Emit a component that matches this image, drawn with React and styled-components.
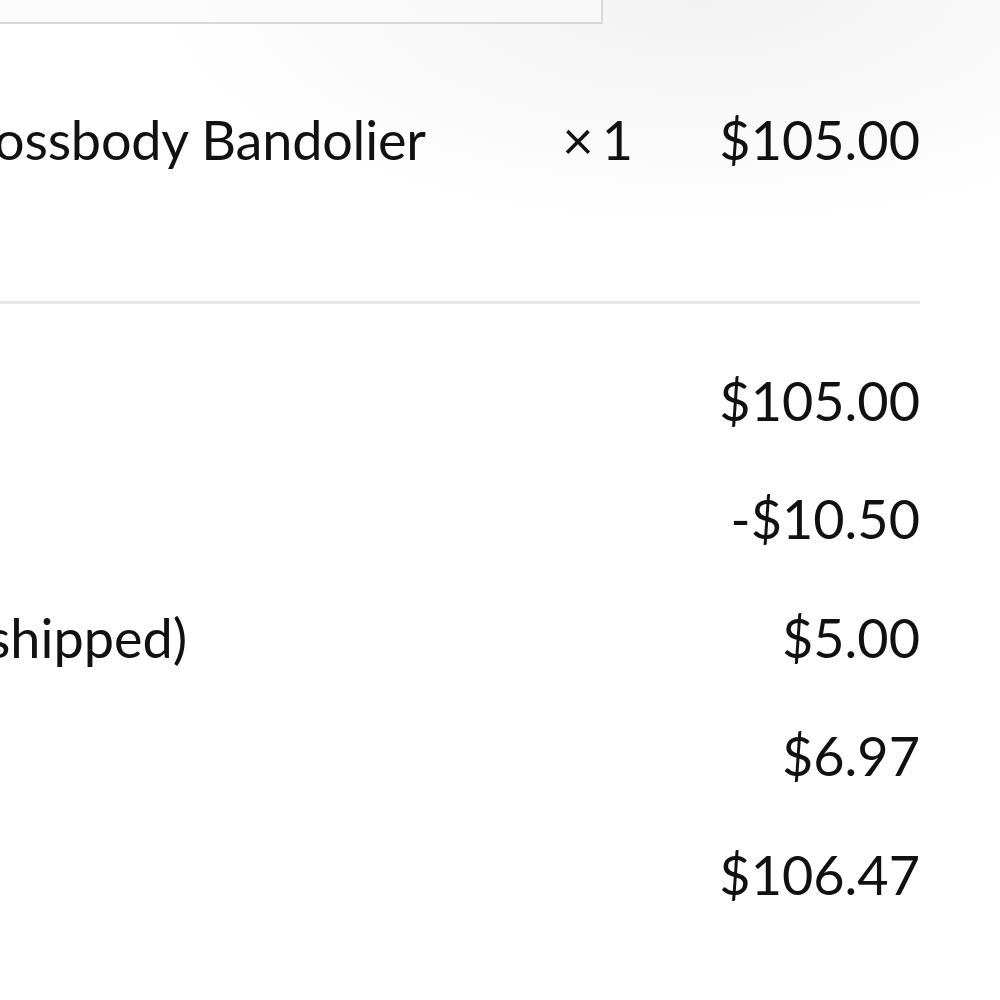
import React from 'react'
import styled, { createGlobalStyle } from 'styled-components'

const GlobalStyle = createGlobalStyle`
  html, body {
    margin: 0;
    padding: 0;
    background: #fff;
  }
  body {
    font-family: Lato, "Liberation Sans", sans-serif;
    color: #111;
  }
`

const Viewport = styled.div`
  width: 1000px;
  height: 1000px;
  overflow: hidden;
  background:
    radial-gradient(ellipse 560px 250px at 700px -20px, rgba(0, 0, 0, 0.055), rgba(0, 0, 0, 0) 100%),
    #fff;
`

const Sheet = styled.div`
  width: 1329px;
  margin-left: -409px;
  font-size: 54px;
  line-height: 81px;
`

const NoteField = styled.div`
  box-sizing: border-box;
  width: 1012px;
  height: 64px;
  margin-top: -40px;
  border: 2px solid #d8d8d8;
  background: rgba(250, 250, 250, 0.6);
`

const ItemRow = styled.div`
  display: flex;
  align-items: baseline;
  padding: 75px 0 121px 349px;
  border-bottom: 3px solid #e6e6e6;
`

const ItemName = styled.div`
  flex: 1;
  white-space: nowrap;
  letter-spacing: -0.2px;
`

const Qty = styled.div`
  white-space: nowrap;
`

const Times = styled.span`
  margin-right: 8px;
`

const Price = styled.div`
  width: 202px;
  margin-left: 85px;
  text-align: right;
  white-space: nowrap;
`

const Summary = styled.div`
  padding-top: 37px;
`

const SummaryRow = styled.div`
  display: flex;
  justify-content: space-between;
  padding: 18.75px 0;
  white-space: nowrap;
`

const Label = styled.span``

const Amount = styled.span`
  text-align: right;
`

const totals = [
  { label: 'Subtotal', value: '$105.00' },
  { label: 'Discount (10%)', value: '-$10.50' },
  { label: 'Shipping (1 item shipped)', value: '$5.00' },
  { label: 'Tax', value: '$6.97' },
  { label: 'Total', value: '$106.47' },
]

export default function App() {
  return (
    <>
      <GlobalStyle />
      <Viewport>
        <Sheet>
          <NoteField />
          <ItemRow>
            <ItemName>Crossbody Bandolier</ItemName>
            <Qty>
              <Times>×</Times>1
            </Qty>
            <Price>$105.00</Price>
          </ItemRow>
          <Summary>
            {totals.map((t) => (
              <SummaryRow key={t.label}>
                <Label>{t.label}</Label>
                <Amount>{t.value}</Amount>
              </SummaryRow>
            ))}
          </Summary>
        </Sheet>
      </Viewport>
    </>
  )
}
